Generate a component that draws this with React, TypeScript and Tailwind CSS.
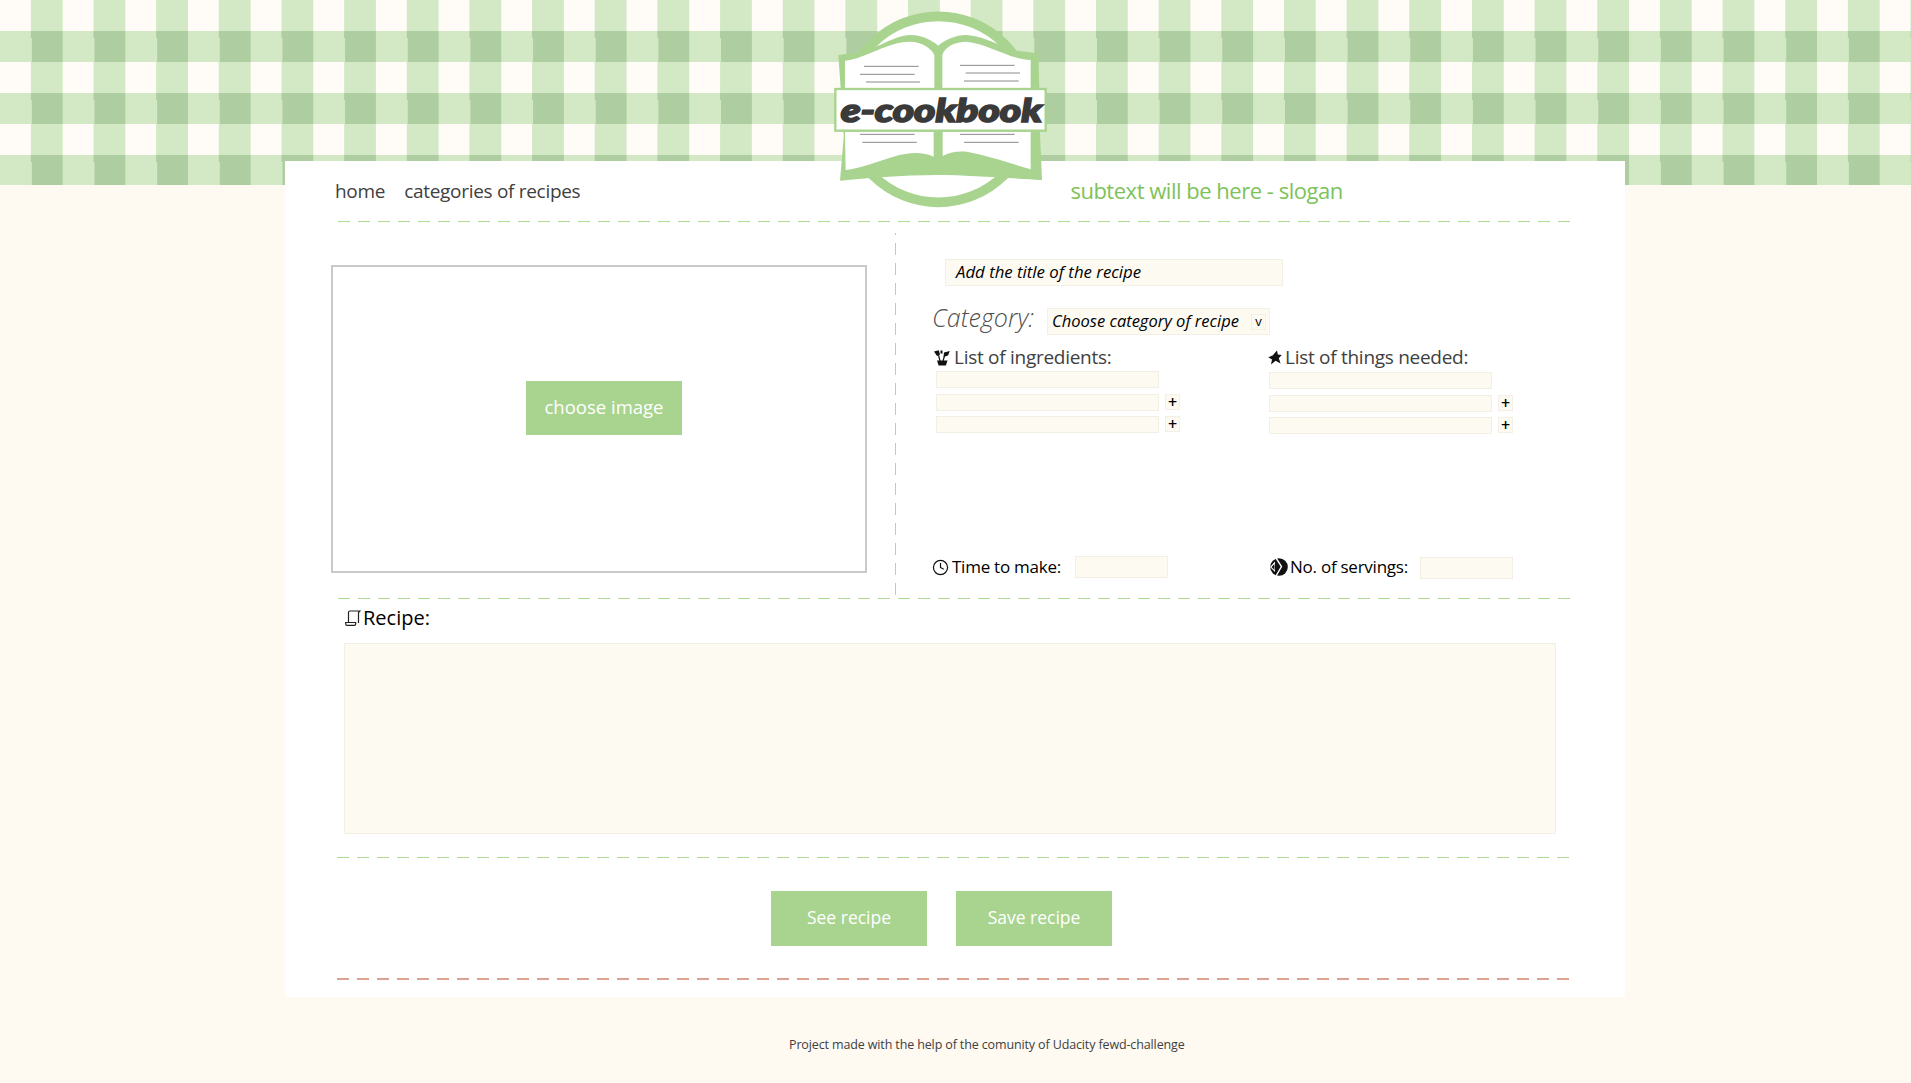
import { Clock } from "lucide-react";

const fieldBase = "bg-[#fdfaf2] border border-[#f4efe5]";

function Plus() {
  return (
    <span className={`${fieldBase} w-[15px] h-[16px] flex items-center justify-center text-[16px] leading-none text-black font-semibold`}>+</span>
  );
}

function PotIcon() {
  return (
    <svg width="16" height="16" viewBox="0 0 16 16" className="shrink-0">
      <path d="M3 10.5h10.5l-1.6 5H4.6z" fill="#111" />
      <path d="M6 11 4.5 5M9 11l1.5-5" stroke="#111" strokeWidth="1.2" fill="none" />
      <path d="M0 1.5 4.8 0.3 6 4.5 3 6z" fill="#111" />
      <path d="M9.5 7 10 2.5 15.8 1 14 5.5z" fill="#111" />
      <path d="M6.5 0.5h2v3h-2z" fill="#111" />
    </svg>
  );
}

function StarIcon() {
  return (
    <svg width="14" height="15" viewBox="0 0 14 15" className="shrink-0">
      <path d="M9 0.5 9.8 4.6 13.7 5 10.8 8.2 12.6 13.5 7.6 10.8 3 14.5 4 9.6 0.3 7.2 4.6 5.4z" fill="#111" />
    </svg>
  );
}

function PieIcon() {
  return (
    <svg width="18" height="18" viewBox="0 0 18 18" className="shrink-0">
      <circle cx="9" cy="9" r="8.8" fill="#111" />
      <path d="M6 0 11.5 8.5 6 18" stroke="#fff" strokeWidth="1.4" fill="none" />
      <path d="M0 9 5 3.5 5 14z" fill="#fff" />
      <path d="M1.5 9 4.5 6 4.5 12z" fill="#111" />
    </svg>
  );
}

function ScrollIcon() {
  return (
    <svg width="16" height="16" viewBox="0 0 16 16" className="shrink-0 ml-[1px]" fill="none" stroke="#222" strokeWidth="1.2">
      <path d="M3.5 12V2.5C3.5 1.5 4.2 1 5 1h10l-1.5 1.5V13" />
      <path d="M0.7 12.5h10v1.5c0 .8-.5 1.3-1.2 1.3H2c-.8 0-1.3-.6-1.3-1.4z" />
    </svg>
  );
}

function Logo() {
  return (
    <svg width="300" height="220" viewBox="0 0 900 660" className="absolute left-[800px] top-0">
      <circle cx="415" cy="328" r="279" fill="#fff" stroke="#a8d48f" strokeWidth="29" />
      <path
        d="M115 165 L190 155 C240 140 280 108 330 105 C370 105 400 125 415 137 C435 120 465 105 500 105 C560 110 600 140 650 152 L715 160 L718 265 L720 400 L726 540 C640 535 500 525 415 525 C300 525 200 535 120 542 L132 400 L122 265 Z"
        fill="#a8d48f"
      />
      <path d="M135 182 C200 175 260 125 330 125 C365 125 395 145 403 165 L403 265 L135 265 Z" fill="#fff" />
      <path d="M427 165 C435 140 465 125 500 125 C560 130 630 178 692 180 L692 265 L427 265 Z" fill="#fff" />
      <path d="M135 395 L401 395 L401 470 C370 455 330 455 280 470 C230 485 180 505 137 510 Z" fill="#fff" />
      <path d="M428 395 L692 395 L692 508 C630 490 560 465 500 455 C470 452 445 458 428 468 Z" fill="#fff" />
      <rect x="106" y="267" width="631" height="125" fill="#fff" stroke="#a8d48f" strokeWidth="7" />
      <g stroke="#8a8a8a" strokeWidth="3">
        <path d="M192 199H356M180 223H344M198 246H360M480 196H644M497 219H660M492 243H656M180 403H344M187 427H350M480 403H644M492 427H656" />
      </g>
      <text
        x="122"
        y="366"
        textLength="604"
        lengthAdjust="spacingAndGlyphs"
        fill="#3a3a3a"
        stroke="#3a3a3a"
        strokeWidth="5"
        fontSize="98"
        fontStyle="italic"
        fontWeight="900"
        fontFamily="Lato, sans-serif"
      >
        e-cookbook
      </text>
    </svg>
  );
}

function Dashes({ color = "green" }: { color?: "green" | "red" }) {
  return (
    <div
      className={
        color === "green"
          ? "h-[1px] mb-[1px] w-[1232px] bg-[repeating-linear-gradient(90deg,#aedb92_0_12px,transparent_12px_20px)]"
          : "h-[2px] w-[1232px] bg-[repeating-linear-gradient(90deg,#dca593_0_12px,transparent_12px_20px)]"
      }
    />
  );
}

function ListColumn({ icon, title, gap, fieldsTop }: { icon: React.ReactNode; title: string; gap: string; fieldsTop: string }) {
  return (
    <div className="w-[333px] h-full">
      <div className={`flex items-center h-[25px] text-[19px] tracking-[-0.28px] text-[#404040] ${gap}`}>
        {icon}
        <span>{title}</span>
      </div>
      <div className={`ml-[4px] flex flex-col ${fieldsTop}`}>
        <div className={`${fieldBase} w-[223px] h-[17px]`} />
        <div className="flex gap-[6px] mt-[6px]">
          <div className={`${fieldBase} w-[223px] h-[17px]`} />
          <Plus />
        </div>
        <div className="flex gap-[6px] mt-[5px]">
          <div className={`${fieldBase} w-[223px] h-[17px]`} />
          <Plus />
        </div>
      </div>
    </div>
  );
}

export default function App() {
  return (
    <div className="relative h-[1083px] overflow-hidden bg-[#fef9f1] font-['Open_Sans','Noto_Sans',sans-serif]">
      <div className="h-[185px] bg-[conic-gradient(#d3e9c5_25%,#aecda1_0_50%,#d3e9c5_0_75%,#fffcf8_0)] bg-[length:62.67px_62px]" />

      <main className="relative ml-[285px] -mt-[24px] w-[1340px] h-[836px] bg-white flex flex-col">
        <nav className="h-[60px] flex items-center text-[19px] tracking-[-0.3px] text-[#404040] pl-[50px]">
          <a>home</a>
          <a className="ml-[19px]">categories of recipes</a>
          <span className="ml-[490px] pb-[2px] text-[22px] tracking-[-0.48px] text-[#7dc25a]">subtext will be here - slogan</span>
        </nav>
        <div className="ml-[53px]">
          <Dashes />
        </div>

        <section className="flex h-[375px]">
          <div className="w-[610px] pl-[46px] pt-[42px]">
            <div className="w-[536px] h-[308px] border-2 border-[#c9c9c9] flex items-center justify-center">
              <button className="w-[156px] h-[54px] pb-[2px] bg-[#a8d48f] text-white text-[18.5px] -mt-[23px] ml-[10px]">choose image</button>
            </div>
          </div>

          <div className="w-[1px] h-[362px] mt-[10px] bg-[repeating-linear-gradient(0deg,#aedb92_0_12px,transparent_12px_20px)]" />

          <div className="flex-1 flex flex-col pl-[36px] pt-[36px] text-[19px]">
            <div className={`${fieldBase} ml-[13px] w-[338px] h-[27px] pb-[2px] flex items-center pl-[10px] text-[16.8px] italic text-black`}>
              Add the title of the recipe
            </div>
            <div className="flex items-center mt-[22px] h-[27px]">
              <span className="w-[115px] pb-[7px] text-[25px] italic font-light text-[#505050]">Category:</span>
              <div className={`${fieldBase} w-[223px] h-[27px] flex items-center justify-between pl-[4px] pr-[3px] text-[16.5px] italic text-black`}>
                <span>Choose category of recipe</span>
                <span className={`${fieldBase} w-[15px] h-[16px] flex items-center justify-center text-[13px] not-italic leading-none`}>v</span>
              </div>
            </div>
            <div className="flex mt-[10px] h-[150px]">
              <ListColumn icon={<PotIcon />} title="List of ingredients:" gap="gap-[4px] pl-[2px]" fieldsTop="mt-[1px]" />
              <ListColumn icon={<StarIcon />} title="List of things needed:" gap="gap-[3px] pl-[3px]" fieldsTop="mt-[2px]" />
            </div>
            <div className="flex mt-[61px] text-[17px] tracking-[-0.25px] text-black">
              <div className="w-[338px] flex items-center h-[22px]">
                <Clock size={17} strokeWidth={1.7} color="#111" className="shrink-0" />
                <span className="ml-[3px]">Time to make:</span>
                <div className={`${fieldBase} ml-[14px] w-[93px] h-[22px]`} />
              </div>
              <div className="flex items-center h-[22px]">
                <PieIcon />
                <span className="ml-[2px]">No. of servings:</span>
                <div className={`${fieldBase} ml-[12px] w-[93px] h-[22px] mt-[2px]`} />
              </div>
            </div>
          </div>
        </section>

        <div className="ml-[53px]">
          <Dashes />
        </div>

        <section className="pl-[59px] pt-[4px]">
          <div className="flex items-center h-[27px] gap-[2px] text-[20px] text-black">
            <ScrollIcon />
            <span>Recipe:</span>
          </div>
          <div className={`${fieldBase} mt-[12px] w-[1212px] h-[191px]`} />
        </section>

        <div className="ml-[52px] mt-[23px]">
          <Dashes />
        </div>

        <div className="flex justify-start gap-[29px] pl-[486px] mt-[32px]">
          <button className="w-[156px] h-[55px] pb-[2px] bg-[#a8d48f] text-white text-[17.5px]">See recipe</button>
          <button className="w-[156px] h-[55px] pb-[2px] bg-[#a8d48f] text-white text-[17.5px]">Save recipe</button>
        </div>

        <div className="ml-[52px] mt-[32px]">
          <Dashes color="red" />
        </div>
      </main>

      <footer className="mt-[39px] pl-[789px] text-[12.5px] tracking-[-0.13px] leading-[18px] text-[#404040]">
        Project made with the help of the comunity of Udacity fewd-challenge
      </footer>

      <Logo />
    </div>
  );
}
